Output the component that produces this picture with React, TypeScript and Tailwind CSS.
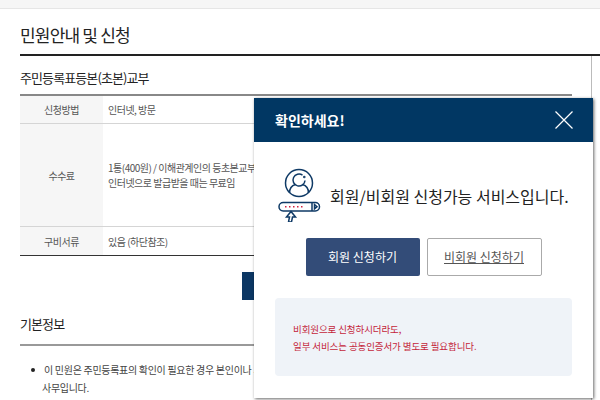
const font = "font-['Noto_Sans_CJK_KR','Noto_Sans',sans-serif]";

function MemberIcon() {
  return (
    <svg viewBox="0 0 44 54" className="h-[54px] w-[44px] shrink-0" fill="none" stroke="#0f3a66" strokeWidth="1.500">
      <circle cx="21" cy="15" r="13.500" />
      <path d="M24.500 7.200A6 6 0 1 0 27 12.500" />
      <circle cx="26.300" cy="9" r="0.500" />
      <path d="M11.500 25c0-5 2.500-7.500 6-8.500M30.500 25c0-5-2.500-7.500-6-8.500" />
      <rect x="1" y="34.500" width="40.500" height="8.500" rx="4.200" />
      <path d="M34 34.500v8.500M36.500 36.500l2.500 2.200-2.500 2.200z" />
      <path d="M10.500 54l1-5h-3l4.500-5.500 4.500 5.500h-3l-1 5z" fill="#fff" />
      <path d="M7 38.700h20" stroke="#d1213f" strokeWidth="1.500" strokeDasharray="1.500 2.500" />
    </svg>
  );
}

function Row({ label, height, last, children }: { label: string; height: string; last?: boolean; children: React.ReactNode }) {
  return (
    <div className={`flex ${height} ${last ? "" : "border-b border-[#d5d5d5]"}`}>
      <div className="flex w-[83px] items-center justify-center bg-[#f6f6f6]">{label}</div>
      <div className="flex flex-1 flex-col justify-center pl-[5px] leading-[15px]">{children}</div>
    </div>
  );
}

export default function App() {
  return (
    <div className={`relative h-[400px] w-[600px] overflow-hidden bg-white text-[#555] ${font}`}>
      <div className="h-[9px] border-b border-[#e6e6e6] bg-[#f6f6f6]" />

      <h1 className="ml-[20px] flex h-[47px] items-center border-b-2 border-[#222] pt-[6px] text-[17px] font-normal tracking-[-0.8px] text-[#222]">
        민원안내 및 신청
      </h1>

      <div className="h-[344px] w-[592px] border-r border-[#bbb] pl-[20px] pr-[19px]">
        <h2 className="flex h-[40px] items-center border-b-2 border-[#888] pt-[6px] text-[13px] font-normal tracking-[-0.900px] text-[#222]">
          주민등록표등본(초본)교부
        </h2>
        <div className="whitespace-nowrap border-b border-[#333] text-[10px] tracking-[-0.5px]">
          <Row label="신청방법" height="h-[28px]">인터넷, 방문</Row>
          <Row label="수수료" height="h-[103px]">
            <p>1통(400원) / 이해관계인의 등초본교부는 수수료 있음</p>
            <p>인터넷으로 발급받을 때는 무료임</p>
          </Row>
          <Row label="구비서류" height="h-[28px]" last>있음 (하단참조)</Row>
        </div>
        <div className="mt-[16px] flex justify-center">
          <div className="h-[28px] w-[108px] bg-[#0c3764]" />
        </div>
        <h2 className="flex h-[46px] items-center border-b-2 border-[#999] pt-[4px] text-[13px] font-normal tracking-[-0.900px] text-[#222]">
          기본정보
        </h2>
        <div className="relative mt-[15px] pl-[22px] text-[10px] leading-[18px] tracking-[-0.3px] text-[#444]">
          <span className="absolute left-[11px] top-[7px] h-[4px] w-[4px] rounded-full bg-[#222]" />
          <p className="ml-[2px]">이 민원은 주민등록표의 확인이 필요한 경우 본인이나 세대원이</p>
          <p>사무입니다.</p>
        </div>
      </div>

      <div className="absolute left-[254px] top-[98px] h-[300px] w-[339px] bg-white shadow-[1px_1px_3px_rgba(0,0,0,0.6)]">
        <div className="flex h-[44px] items-center justify-between bg-[#013763] pl-[21px] pr-[20px] text-white">
          <span className="text-[14px] font-bold">확인하세요!</span>
          <svg viewBox="0 0 18 18" className="h-[18px] w-[18px]" stroke="#fff" strokeWidth="1.200">
            <path d="M0.500 0.500l17 17M17.500 0.500l-17 17" />
          </svg>
        </div>

        <div className="mt-[26px] flex items-start pl-[24px]">
          <MemberIcon />
          <p className="ml-[8px] mt-[16px] whitespace-nowrap text-[16px] text-[#222]">
            회원/비회원 신청가능 서비스입니다.
          </p>
        </div>

        <div className="mt-[16px] flex justify-center gap-[7px]">
          <button className="h-[38px] w-[114px] rounded-[2px] bg-[#334c78] text-[12px] text-white">회원 신청하기</button>
          <button className="h-[38px] w-[115px] rounded-[2px] border border-[#aaa] text-[12px] text-[#555] underline">비회원 신청하기</button>
        </div>

        <div className="mx-[21px] mt-[22px] flex h-[78px] flex-col justify-center rounded-[4px] bg-[#eff3f8] pl-[18px] pt-[2px] text-[9.500px] leading-[17px] tracking-[-0.1px] text-[#c41e3a]">
          <p>비회원으로 신청하시더라도,</p>
          <p>일부 서비스는 공동인증서가 별도로 필요합니다.</p>
        </div>
      </div>
    </div>
  );
}
